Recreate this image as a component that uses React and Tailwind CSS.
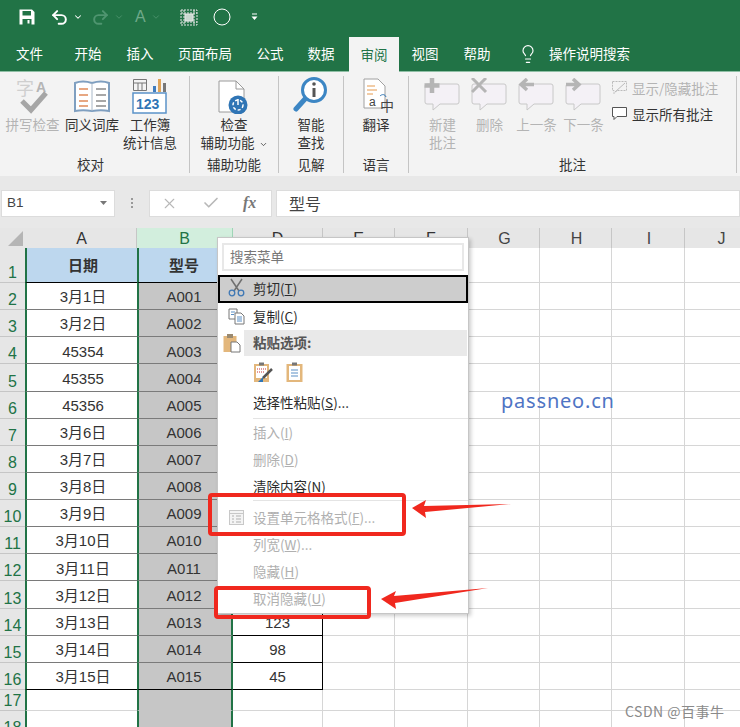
import { Undo2, Redo2, ChevronDown, Lightbulb, X, Check } from "lucide-react"

const cjk = "font-['Microsoft_YaHei','Noto_Sans_CJK_SC','Noto_Sans',sans-serif]"

const tabs = [
  ["文件", "w-[59px]"],
  ["开始", "w-[58px]"],
  ["插入", "w-[46px]"],
  ["页面布局", "w-[84px]"],
  ["公式", "w-[46px]"],
  ["数据", "w-[56px]"],
]

const dates = ["3月1日", "3月2日", "45354", "45355", "45356", "3月6日", "3月7日", "3月8日", "3月9日", "3月10日", "3月11日", "3月12日", "3月13日", "3月14日", "3月15日"]
const qty = { 13: "123", 14: "98", 15: "45" }
const cols = ["G", "H", "I", "J"]

const SaveIcon = () => (
  <svg width="16" height="16" viewBox="0 0 16 16" fill="#fff">
    <path fillRule="evenodd" d="M0.500 0.500h12.500l2.500 2.500v12.500H0.500zM3.500 2v4.500h8.500V2zM3.500 10v5.500h9V10zM8.500 11h2v3.500h-2z" />
  </svg>
)

const SpellIcon = () => (
  <svg width="34" height="36" viewBox="0 0 34 36" fill="none">
    <text x="0" y="17" fontSize="18" fill="#cfcfcf" fontFamily="Noto Sans CJK SC">字</text>
    <text x="20" y="14" fontSize="14" fontWeight="700" fill="#b5b5b5" fontFamily="Liberation Sans">A</text>
    <path d="M6 23l9 9L30 15" stroke="#a6a6a6" strokeWidth="5" />
  </svg>
)

const BookIcon = () => (
  <svg width="36" height="34" viewBox="0 0 36 34" fill="none">
    <path d="M1 3c5-2 11-2 17 0 6-2 12-2 17 0v28c-5-1-11-1-17 0-6-1-12-1-17 0z" fill="#fff" stroke="#7f9fc0" strokeWidth="2" />
    <path d="M18 3v28" stroke="#a9b8c8" />
    <path d="M5 9h9M5 15h9M5 21h9M5 26h9" stroke="#e08a5a" strokeWidth="1.300" />
    <path d="M22 9h10M22 15h10M22 21h10M22 26h10" stroke="#8a8a8a" strokeWidth="1.300" />
  </svg>
)

const StatsIcon = () => (
  <svg width="36" height="36" viewBox="0 0 36 36" fill="none">
    <path d="M1.500 1.500h13v11h-13zM1.500 5h13M6 5v8M10 5v8" stroke="#777" />
    <path d="M21 8h3v6h-3z" fill="#3f7cbf" />
    <path d="M26 1h3v13h-3z" fill="#e0a458" />
    <path d="M31 5h3v9h-3z" fill="#777" />
    <rect x="1" y="15" width="33" height="20" fill="#fff" stroke="#5b93c9" strokeWidth="1.500" />
    <text x="4" y="31" fontSize="14" fontWeight="700" fill="#2f75b5" fontFamily="Liberation Sans">123</text>
  </svg>
)

const AccessIcon = () => (
  <svg width="32" height="34" viewBox="0 0 32 34" fill="none">
    <path d="M1 1h17l8 8v23H1z" fill="#fff" stroke="#9a9a9a" />
    <path d="M18 1v8h8" stroke="#9a9a9a" />
    <circle cx="20" cy="25" r="9.500" fill="#2f75b5" />
    <circle cx="20" cy="25" r="5" stroke="#fff" strokeWidth="1.500" strokeDasharray="3 2" />
    <path d="M20 19v6" stroke="#fff" strokeWidth="1.500" />
  </svg>
)

const SmartIcon = () => (
  <svg width="36" height="38" viewBox="0 0 36 38" fill="none">
    <circle cx="21" cy="14" r="11.500" fill="#fff" stroke="#3c86c4" strokeWidth="3" />
    <path d="M12 23L3 33" stroke="#3c86c4" strokeWidth="5" strokeLinecap="round" />
    <circle cx="21" cy="8" r="1.800" fill="#555" />
    <path d="M21 12v9" stroke="#555" strokeWidth="3" />
  </svg>
)

const TranslateIcon = () => (
  <svg className="ml-[6px]" width="32" height="36" viewBox="0 0 32 36" fill="none">
    <path d="M1 1h14l7 7v22H1z" fill="#fff" stroke="#a0a0a0" />
    <path d="M4 8h8M4 12h10M4 16h6" stroke="#e59a4f" />
    <text x="6" y="28" fontSize="12" fill="#444" fontFamily="Liberation Sans">a</text>
    <text x="17" y="33" fontSize="14" fill="#444" fontFamily="Noto Sans CJK SC">中</text>
    <path d="M17 18c2-2 5-2 6 1" stroke="#2f75b5" />
  </svg>
)

// speech bubble with a grey mark on top
const CommentIcon = ({ mark }) => (
  <svg width="38" height="36" viewBox="0 0 38 36" fill="none">
    <path d="M3 6h30a2 2 0 0 1 2 2v16a2 2 0 0 1-2 2H16l-7 6v-6H3a2 2 0 0 1-2-2V8a2 2 0 0 1 2-2z" fill="#f4f1f6" stroke="#c8c8c8" />
    {mark === "plus" && <path d="M8 0v15M0.500 7.500h15" stroke="#b5b5b5" strokeWidth="4.500" />}
    {mark === "x" && <path d="M1 0l14 14M15 0L1 14" stroke="#b5b5b5" strokeWidth="3" />}
    {mark === "prev" && <path d="M16 6.500H4M9 1L3 6.500 9 12" stroke="#b5b5b5" strokeWidth="3.500" />}
    {mark === "next" && <path d="M1 6.500h12M8 1l6 5.500L8 12" stroke="#b5b5b5" strokeWidth="3.500" />}
  </svg>
)

const SmallBubble = ({ dim }) => (
  <svg width="17" height="16" viewBox="0 0 17 16" fill="none">
    <path d="M1.500 1.500h14v9H6l-3 3v-3H1.500z" fill={dim ? "none" : "#fff"} stroke={dim ? "#bbb" : "#555"} strokeDasharray={dim ? "2 1" : undefined} />
    {dim && <path d="M4 12L14 3" stroke="#bbb" />}
  </svg>
)

const ScissorsIcon = () => (
  <svg width="17" height="19" viewBox="0 0 17 19" fill="none">
    <path d="M3 1l8 12M14 1L6 13" stroke="#6f6f6f" strokeWidth="1.500" />
    <circle cx="4" cy="15" r="2.800" stroke="#3f78b5" strokeWidth="1.300" />
    <circle cx="13" cy="15" r="2.800" stroke="#3f78b5" strokeWidth="1.300" />
  </svg>
)

const CopyIcon = () => (
  <svg width="17" height="17" viewBox="0 0 17 17" fill="#fff">
    <path d="M1 1h8v10H1z" stroke="#777" />
    <path d="M7 5h6l3 3v8H7z" stroke="#777" />
    <path d="M3 4h4M3 6.500h3M9 9h5M9 11h5M9 13h5" stroke="#5b8fc5" />
  </svg>
)

const PasteIcon = () => (
  <svg width="18" height="20" viewBox="0 0 18 20" fill="none">
    <rect x="0.500" y="3" width="13" height="16" fill="#e3b77c" />
    <path d="M4 1h6v4H4z" fill="#9a8a70" />
    <path d="M8 9h6l3 3v7H8z" fill="#fff" stroke="#777" />
  </svg>
)

const PasteFormat = () => (
  <svg width="20" height="21" viewBox="0 0 20 21" fill="none">
    <rect x="1" y="2" width="15" height="18" fill="#e3b77c" />
    <rect x="3" y="4" width="11" height="12" fill="#fff" />
    <path d="M6 0.500h5v3H6z" fill="#777" />
    <path d="M4 7h9M4 10h7" stroke="#d77" strokeWidth="1.500" strokeDasharray="1 1" />
    <path d="M19 7l-9 9" stroke="#555" strokeWidth="2.500" />
    <path d="M10 15l-5 5h5z" fill="#2f75b5" />
  </svg>
)

const PasteValues = () => (
  <svg width="17" height="21" viewBox="0 0 17 21" fill="none">
    <rect x="0.500" y="2" width="16" height="18" fill="#e3b77c" />
    <rect x="3" y="4" width="11" height="14" fill="#fff" />
    <path d="M6 0.500h5v3H6z" fill="#777" />
    <path d="M5 8h7M5 11h7M5 14h7" stroke="#5b8fc5" />
  </svg>
)

const FormatIcon = () => (
  <svg width="15" height="15" viewBox="0 0 15 15" fill="none">
    <rect x="0.500" y="0.500" width="14" height="14" fill="#f4f4f4" stroke="#c8c8c8" />
    <path d="M1 3.500h13" stroke="#c8c8c8" />
    <path d="M3 6h2M3 9h2M3 12h2M7 6h5M7 9h5M7 12h5" stroke="#b0b0b0" />
  </svg>
)

const RibbonButton = ({ width, icon, lines, dim, arrow }) => (
  <div className={`${width} flex flex-col items-center`}>
    <div className="h-[36px] flex items-end justify-center">{icon}</div>
    <div className={`mt-px text-[13.5px] leading-[18px] text-center whitespace-nowrap ${dim ? "text-[#b4b4b4]" : "text-[#333]"}`}>
      {lines.map((line, i) => (
        <div key={line}>
          {line}
          {arrow && i === lines.length - 1 && <ChevronDown size={9} strokeWidth={2} className="inline ml-1" />}
        </div>
      ))}
    </div>
  </div>
)

const RibbonGroup = ({ width, label, children, labelClass }) => (
  <div className={`${width} h-[97px] flex flex-col border-r border-[#c4c4c4]`}>
    <div className="flex h-[78px] pt-[2px]">{children}</div>
    <div className={`text-[13.5px] leading-[17px] text-center text-[#333] mt-auto ${labelClass || ""}`}>{label}</div>
  </div>
)

const MenuItem = ({ icon, label, dim }) => (
  <div className={`h-[27px] flex items-center text-[13.5px] pb-px ${dim ? "text-[#b0b0b0]" : "text-[#2b2b2b]"}`}>
    <div className="w-[35px] flex justify-center pl-[2px]">{icon}</div>
    {label}
  </div>
)

const Arrow = ({ className, d }) => (
  <svg className={className} width="110" height="24" viewBox="0 0 110 24">
    <path d={d} fill="#f0281e" />
  </svg>
)

export default function App() {
  return (
    <div className={`${cjk} w-[740px] h-[727px] overflow-hidden relative bg-white flex flex-col`}>
      {/* Title bar */}
      <div className="h-[37px] bg-[#217346] flex items-center pl-[19px] pb-[3px] text-white shrink-0">
        <SaveIcon />
        <Undo2 size={19} strokeWidth={2.5} className="ml-[15px]" />
        <ChevronDown size={10} strokeWidth={2.5} className="ml-[4px]" />
        <Redo2 size={19} strokeWidth={2.5} className="ml-[8px] text-[#4f9570]" />
        <ChevronDown size={10} className="ml-[4px] text-[#4f9570]" />
        <span className="ml-[11px] text-[16px] leading-none font-['Liberation_Sans'] text-[#6fa98a]">A</span>
        <ChevronDown size={10} className="ml-[5px] text-[#4f9570]" />
        <svg className="ml-[19px]" width="18" height="19" viewBox="0 0 18 19" fill="none" stroke="#e8e8e8">
          <path d="M1 2h16v15H1zM1 5h16M1 14h16M4 2v15M14 2v15" strokeDasharray="2 1" />
          <rect x="5" y="6" width="8" height="7" fill="#c8d8cf" />
        </svg>
        <svg className="ml-[15px]" width="18" height="18" viewBox="0 0 18 18" fill="none" stroke="#fff">
          <circle cx="9" cy="9" r="8" />
        </svg>
        <svg className="ml-[20px]" width="7" height="8" viewBox="0 0 7 8" fill="#fff">
          <path d="M1 0.500h5v1H1zM0.500 3.500h6L3.500 7z" />
        </svg>
      </div>

      {/* Tabs */}
      <div className="h-[35px] bg-[#217346] flex text-[13.5px] text-white border-b border-[#8fbfa5] shrink-0">
        {tabs.map(([name, w]) => (
          <div key={name} className={`${w} flex items-center justify-center pb-px`}>{name}</div>
        ))}
        <div className="w-[50px] -mb-px bg-[#f3f3f3] text-[#217346] flex items-center justify-center pb-px">审阅</div>
        <div className="w-[52px] flex items-center justify-center pb-px">视图</div>
        <div className="w-[52px] flex items-center justify-center pb-px">帮助</div>
        <div className="flex items-center ml-[15px] pb-px">
          <Lightbulb size={20} strokeWidth={1.4} />
          <span className="ml-[11px]">操作说明搜索</span>
        </div>
      </div>

      {/* Ribbon */}
      <div className="h-[104px] bg-[#f3f3f3] flex pt-[4px] shrink-0">
        <RibbonGroup width="w-[190px]" label="校对" labelClass="pr-[8px]">
          <RibbonButton width="w-[61px] ml-[2px]" icon={<SpellIcon />} lines={["拼写检查"]} dim />
          <RibbonButton width="w-[58px]" icon={<BookIcon />} lines={["同义词库"]} />
          <RibbonButton width="w-[58px]" icon={<StatsIcon />} lines={["工作簿", "统计信息"]} />
        </RibbonGroup>
        <RibbonGroup width="w-[89px]" label="辅助功能">
          <RibbonButton width="w-full" icon={<AccessIcon />} lines={["检查", "辅助功能"]} arrow />
        </RibbonGroup>
        <RibbonGroup width="w-[65px]" label="见解">
          <RibbonButton width="w-full" icon={<SmartIcon />} lines={["智能", "查找"]} />
        </RibbonGroup>
        <RibbonGroup width="w-[65px]" label="语言">
          <RibbonButton width="w-full" icon={<TranslateIcon />} lines={["翻译"]} />
        </RibbonGroup>
        <RibbonGroup width="w-[328px]" label="批注">
          <div className="flex pl-[10px]">
            <RibbonButton width="w-[47px]" icon={<CommentIcon mark="plus" />} lines={["新建", "批注"]} dim />
            <RibbonButton width="w-[47px]" icon={<CommentIcon mark="x" />} lines={["删除"]} dim />
            <RibbonButton width="w-[47px]" icon={<CommentIcon mark="prev" />} lines={["上一条"]} dim />
            <RibbonButton width="w-[47px]" icon={<CommentIcon mark="next" />} lines={["下一条"]} dim />
            <div className="ml-[4px] -mt-[3px] text-[13.5px] whitespace-nowrap">
              <div className="h-[26px] flex items-center gap-[4px] text-[#b4b4b4]"><SmallBubble dim />显示/隐藏批注</div>
              <div className="h-[26px] flex items-center gap-[4px] text-[#333]"><SmallBubble />显示所有批注</div>
            </div>
          </div>
        </RibbonGroup>
      </div>

      {/* Formula bar */}
      <div className="h-[52px] bg-[#e8e8e8] flex items-center pt-[2px] shrink-0">
        <div className="ml-[1px] w-[114px] h-[27px] bg-white border border-[#dcdcdc] flex items-center justify-between pl-[5px] pr-[7px] text-[13.5px] text-[#444] font-['Liberation_Sans']">
          B1
          <svg width="7" height="4" viewBox="0 0 7 4" fill="#777"><path d="M0 0h7L3.500 4z" /></svg>
        </div>
        <div className="w-[34px] flex flex-col items-center gap-[2px]">
          <span className="w-[2px] h-[2px] bg-[#999]" />
          <span className="w-[2px] h-[2px] bg-[#999]" />
          <span className="w-[2px] h-[2px] bg-[#999]" />
        </div>
        <div className="w-[123px] h-[27px] bg-white border border-[#dcdcdc] flex items-center text-[#b8b8b8]">
          <X size={17} strokeWidth={1.6} className="ml-[11px]" />
          <Check size={18} strokeWidth={2.2} className="ml-[24px]" />
          <span className="ml-[23px] text-[16px] italic font-['Liberation_Serif'] font-bold text-[#777]">fx</span>
        </div>
        <div className="ml-[4px] flex-1 h-[27px] bg-white border border-[#dcdcdc] flex items-center pl-[12px] text-[16px] text-[#444]">型号</div>
      </div>

      {/* Sheet */}
      <div className="grid grid-cols-[25px_112px_96px_90px_72px_73px_72px_72px_73px_72px] grid-rows-[20px_35px_repeat(15,27.13px)_21px_27px] text-[15px] text-[#333] font-['Liberation_Sans','Noto_Sans_CJK_SC',sans-serif]">
        <div className="bg-[#e6e6e6] relative overflow-hidden">
          <svg className="absolute right-[2px] bottom-[2px]" width="15" height="15" viewBox="0 0 15 15" fill="#b5b5b5"><path d="M15 0v15H0z" /></svg>
        </div>
        <div className="bg-[#e6e6e6] border-r border-[#c6c6c6] flex items-center justify-center pt-[2px] pl-[2px] text-[16px]">A</div>
        <div className="bg-[#d2eedd] border-r border-[#9fd5b7] flex items-center justify-center pt-[2px] text-[16px] text-[#217346]">B</div>
        <div className="bg-[#e6e6e6] border-r border-[#c6c6c6] flex items-center justify-center pt-[2px] text-[16px]">D</div>
        <div className="bg-[#e6e6e6] border-r border-[#c6c6c6] flex items-center justify-center pt-[2px] text-[16px]">E</div>
        <div className="bg-[#e6e6e6] border-r border-[#c6c6c6] flex items-center justify-center pt-[2px] text-[16px]">F</div>
        {cols.map((c) => (
          <div key={c} className="bg-[#e6e6e6] border-r border-[#c6c6c6] flex items-center justify-center pt-[2px] pl-[2px] text-[16px] text-[#444]">{c}</div>
        ))}

        {Array.from({ length: 18 }, (_, r) => (
          <Row key={r} r={r} />
        ))}
      </div>

      {/* Context menu */}
      <div className="absolute left-[217px] top-[237px] w-[252px] h-[377px] bg-white border border-[#c6c6c6] shadow-[2px_2px_4px_rgba(0,0,0,0.2)]">
        <div className="mx-[4px] mt-[5px] h-[28px] border-2 border-[#e8e8e8] flex items-center pl-[6px] pb-[2px] text-[13.5px] text-[#777]">搜索菜单</div>
        <div className="mt-[4px] h-[28px] bg-[#cdcdcd] border-2 border-black flex items-center pb-px text-[13.5px] text-[#2b2b2b]">
          <div className="w-[32px] flex justify-center -mt-[3px] mr-[1px]"><ScissorsIcon /></div>
          剪切(<u>T</u>)
        </div>
        <MenuItem icon={<CopyIcon />} label={<span>复制(<u>C</u>)</span>} />
        <div className="h-[26px] flex items-center text-[13.5px] font-bold text-[#555]">
          <div className="w-[26px] flex justify-center pl-[2px]"><PasteIcon /></div>
          <div className="flex-1 h-full bg-[#e9e9e9] flex items-center pl-[9px] pb-[2px] mr-px">粘贴选项:</div>
        </div>
        <div className="h-[33px] flex items-center pl-[35px] gap-[13px]">
          <PasteFormat />
          <PasteValues />
        </div>
        <MenuItem label={<span>选择性粘贴(<u>S</u>)...</span>} />
        <div className="ml-[35px] border-t border-[#e4e4e4] mt-[2px]" />
        <MenuItem dim label={<span>插入(<u>I</u>)</span>} />
        <MenuItem dim label={<span>删除(<u>D</u>)</span>} />
        <MenuItem label={<span>清除内容(<u>N</u>)</span>} />
        <div className="ml-[35px] border-t border-[#e4e4e4] mb-[3px]" />
        <MenuItem dim icon={<FormatIcon />} label={<span>设置单元格格式(<u>F</u>)...</span>} />
        <MenuItem dim label={<span>列宽(<u>W</u>)...</span>} />
        <MenuItem dim label={<span>隐藏(<u>H</u>)</span>} />
        <MenuItem dim label={<span>取消隐藏(<u>U</u>)</span>} />
      </div>

      {/* Annotations */}
      <div className="absolute left-[208px] top-[493px] w-[198px] h-[43px] border-[4px] border-[#f0281e] rounded-[4px]" />
      <div className="absolute left-[214px] top-[586px] w-[157px] h-[33px] border-[4px] border-[#f0281e] rounded-[4px]" />
      <Arrow className="absolute left-[411px] top-[497px]" d="M1 11L15 3 13 9 100 7 14 15 15 21z" />
      <Arrow className="absolute left-[380px] top-[585px]" d="M1 14L16 6 14 11 108 3 15 18 16 24z" />

      <div className="absolute left-[501px] top-[388px] text-[20px] leading-[26px] tracking-[0.8px] text-[#4f74c4] font-['Noto_Sans',sans-serif]">passneo.cn</div>
      <div className="absolute left-[625px] top-[702px] text-[14px] leading-[18px] tracking-[0.5px] text-[#8a8a8a]">CSDN @百事牛</div>
    </div>
  )
}

function Row({ r }) {
  const data = r < 16
  const dataLine = r === 15 || r === 0 ? "border-b-black" : "border-b-[#7a7a7a]"
  const gridCell = "border-r border-b border-[#d6d6d6]"
  const header = r === 0
  const aCls = header ? "bg-[#bdd7ee] font-bold" : "bg-white"
  return (
    <>
      <div className="bg-[#e6e6e6] border-b border-[#c6c6c6] flex items-end justify-center text-[16px] leading-[18px] text-[#217346]">{r + 1}</div>
      <div className={`border-l-2 border-l-[#217346] flex items-center justify-center pt-[3px] pl-[2px] border-b ${data ? dataLine : "border-b-[#d6d6d6]"} ${aCls}`}>
        {header ? "日期" : data ? dates[r - 1] : ""}
      </div>
      <div className={`border-x-2 border-x-[#217346] flex items-center justify-center pt-[3px] pr-[2px] border-b ${data ? dataLine : "border-b-[#c6c6c6]"} ${header ? "bg-[#bdd7ee] font-bold" : "bg-[#c6c6c6]"}`}>
        {header ? "型号" : data ? `A${String(r).padStart(3, "0")}` : ""}
      </div>
      <div className={data ? "border-r border-b border-black flex items-center justify-center pt-[3px]" : gridCell}>
        {qty[r]}
      </div>
      <div className={gridCell} />
      <div className={gridCell} />
      <div className={gridCell} />
      <div className={gridCell} />
      <div className={gridCell} />
      <div className={gridCell} />
    </>
  )
}
